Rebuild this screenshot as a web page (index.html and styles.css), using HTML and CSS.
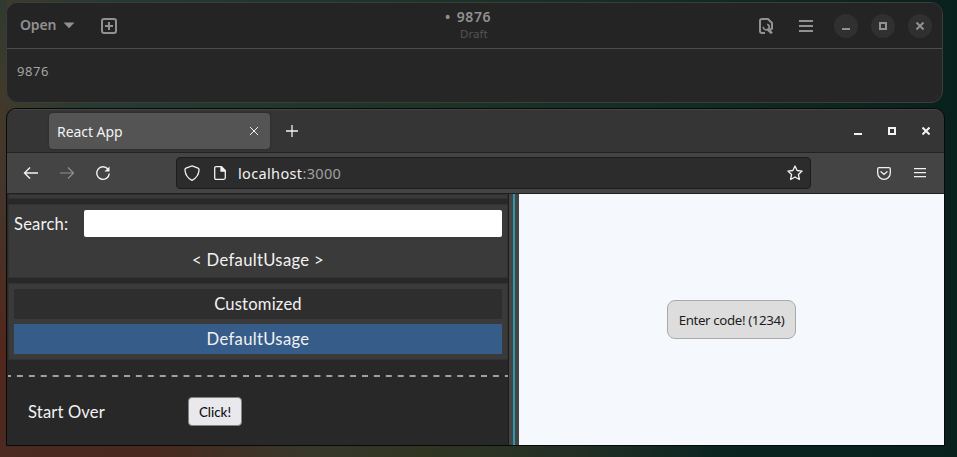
FILE: index.html
```html
<!DOCTYPE html>
<html lang="en">
<head>
<meta charset="utf-8">
<title>Desktop</title>
<link rel="stylesheet" href="styles.css">
</head>
<body>
<section class="editor">
  <header class="editor-bar">
    <div class="editor-left">
      <span class="open">Open</span>
      <svg class="caret" width="12" height="7" viewBox="0 0 12 7"><path d="M0.5 0.5h11L6 6.3z" fill="currentColor"/></svg>
      <svg class="new-tab" width="16" height="16" viewBox="0 0 16 16" fill="none" stroke="currentColor" stroke-width="2"><rect x="1" y="1" width="14" height="14" rx="2"/><path d="M8 4v8M4 8h8"/></svg>
    </div>
    <div class="editor-title"><div class="name"><span>•</span><span>9876</span></div><div class="state">Draft</div></div>
    <div class="editor-right">
      <svg width="16" height="16" viewBox="0 0 16 16" fill="none" stroke="currentColor" stroke-width="2"><path d="M7 15H4Q2 15 2 13V3Q2 1 4 1h6l4 4v6.500"/><path d="M5.300 8.800a2.900 2.900 0 0 0 4 2.800l3.700 3.700M9.200 6.200a2.900 2.900 0 0 1 1.800 3.600l2.500 2.500" stroke-width="1.600"/><path d="M9.500 10.500l4.500 4.800" stroke-width="2.400"/></svg>
      <svg class="menu" width="14" height="14" viewBox="0 0 14 14" fill="none" stroke="currentColor" stroke-width="2"><path d="M0 2h14M0 7h14M0 12h14"/></svg>
      <i class="round"><svg width="8" height="8" viewBox="0 0 8 8"><path d="M0 6h8v2H0z" fill="currentColor"/></svg></i>
      <i class="round"><svg width="8" height="8" viewBox="0 0 8 8" fill="none" stroke="currentColor" stroke-width="2"><path d="M1 1h6v6H1z"/></svg></i>
      <i class="round"><svg width="8" height="8" viewBox="0 0 8 8" fill="none" stroke="currentColor" stroke-width="2"><path d="M.5.5l7 7M7.5.5l-7 7"/></svg></i>
    </div>
  </header>
  <div class="editor-text">9876</div>
</section>

<section class="browser">
  <header class="tabs">
    <div class="tab"><span>React App</span><svg width="10" height="10" viewBox="0 0 10 10" stroke="currentColor" fill="none" stroke-width="1"><path d="M1 1l8 8M9 1l-8 8"/></svg></div>
    <svg class="plus" width="12" height="12" viewBox="0 0 12 12" stroke="currentColor" fill="none" stroke-width="1.3"><path d="M6 0v12M0 6h12"/></svg>
    <div class="controls">
      <svg width="8" height="8" viewBox="0 0 8 8"><path d="M0 6h8v2H0z" fill="currentColor"/></svg>
      <svg width="8" height="8" viewBox="0 0 8 8" fill="none" stroke="currentColor" stroke-width="2"><path d="M1 1h6v6H1z"/></svg>
      <svg width="8" height="8" viewBox="0 0 8 8" fill="none" stroke="currentColor" stroke-width="2"><path d="M.5.5l7 7M7.5.5l-7 7"/></svg>
    </div>
  </header>
  <nav class="toolbar">
    <div class="nav">
      <svg width="16" height="16" viewBox="0 0 16 16" fill="none" stroke="currentColor" stroke-width="1.4"><path d="M15 8H1.5M7 2.5L1.5 8 7 13.5"/></svg>
      <svg class="off" width="16" height="16" viewBox="0 0 16 16" fill="none" stroke="currentColor" stroke-width="1.2"><path d="M1 8h13.5M9 2.5L14.500 8 9 13.500"/></svg>
      <svg width="16" height="16" viewBox="0 0 16 16" fill="none" stroke="currentColor" stroke-width="1.4"><path d="M13 4.200A6.300 6.300 0 1 0 14.300 8.500"/><path d="M14.500 1.500v5H9.500z" fill="currentColor" stroke="none"/></svg>
    </div>
    <div class="address">
      <svg width="16" height="16" viewBox="0 0 16 16" fill="none" stroke="currentColor" stroke-width="1.300"><path d="M8 .9l6 2.300q1.200.5 1 2Q14.500 12 8 15.300 1.500 12 1 5.200.8 3.700 2 3.200z"/></svg>
      <svg class="page" width="12" height="14" viewBox="0 0 12 14" fill="none" stroke="currentColor" stroke-width="1.300"><path d="M2.200.7H7.500L11.300 4.500v7.300q0 1.500-1.500 1.500H2.200Q.7 13.300.7 11.800V2.200Q.7.700 2.200.7z"/><path d="M7 .700v4.300h4.300z" fill="currentColor"/></svg>
      <span class="url">localhost<em>:3000</em></span>
      <svg class="star" width="16" height="16" viewBox="0 0 16 16" fill="none" stroke="currentColor" stroke-width="1.300" stroke-linejoin="round"><path d="M8 1l2.100 4.500 5 .6-3.700 3.400 1 5L8 12l-4.400 2.500 1-5L.9 6.100l5-.6z"/></svg>
    </div>
    <svg class="pocket" width="14" height="13" viewBox="0 0 14 13" fill="none" stroke="currentColor" stroke-width="1.300" stroke-linecap="round"><path d="M2 .7h10q1.300 0 1.300 1.300v4a6.300 6.300 0 0 1-12.600 0V2Q.7.700 2 .7zM4 4.800l3 2.700 3-2.700"/></svg>
    <svg class="burger" width="12" height="10" viewBox="0 0 12 10" fill="none" stroke="currentColor" stroke-width="1.200"><path d="M0 .6h12M0 4.600h12M0 8.600h12"/></svg>
  </nav>
  <main class="content">
    <aside class="side">
      <div class="stub"></div>
      <div class="box search">
        <label class="search-row"><span class="q search-label">Search:</span><input type="text"></label>
        <div class="current"><span class="q crumb">&lt; DefaultUsage &gt;</span></div>
      </div>
      <div class="box list">
        <div class="item"><span class="q custom">Customized</span></div>
        <div class="item selected"><span class="q usage">DefaultUsage</span></div>
      </div>
      <svg class="dashes" width="500" height="2"><path d="M-3 1h504" stroke="#a0a0a0" stroke-width="2" stroke-dasharray="6 5.9"/></svg>
      <div class="action"><span class="q over">Start Over</span><button class="click"><span>Click!</span></button></div>
    </aside>
    <div class="splitter"></div>
    <div class="preview"><button class="code"><span>Enter code! (1234)</span></button></div>
  </main>
</section>
</body>
</html>
```
FILE: styles.css
```css
* { box-sizing: border-box; }
body {
  margin: 0; width: 957px; height: 457px; overflow: hidden;
  padding: 2px 12px 0 6px;
  font-family: "Noto Sans", sans-serif;
  background: linear-gradient(to bottom, #2f3a31 0, #403a2b 20%, #45352a 45%, #52271c 75%, #4b2a21 100%) 0 0 / 7px 100% no-repeat,
    linear-gradient(to right, #403a2b 0, #263a31 10%, #1b3426 45%, #102b23 75%, #09211d 100%) 0 0 / 100% 110px no-repeat,
    linear-gradient(to right, #4b2a21 0, #49291f 16%, #37372a 32%, #303522 45%, #222f25 60%, #0b2420 75%, #09211d 100%);
}
svg { display: block; flex: none; }
.editor {
  width: 937px; height: 101px; border: 1px solid #3c3c3c; border-radius: 12px;
  background: #262626; color: #919191; overflow: hidden;
}
.editor-bar {
  height: 46px; display: grid; grid-template-columns: 1fr auto 1fr; align-items: center;
  background: #242424; border-bottom: 1px solid #4c4c4c;
}
.editor-left, .editor-right { display: flex; align-items: center; }
.editor-left { padding-left: 13px; }
.open { font-size: 14px; font-weight: 600; line-height: 20px; width: 43px; letter-spacing: -.15px; padding-bottom: 1px; }
.new-tab { margin-left: 26px; }
.editor-title { padding-right: 13px; padding-bottom: 2px; }
.name { display: flex; gap: 6px; font-size: 14px; font-weight: 600; line-height: 17px; letter-spacing: .5px; }
.state { font-size: 11.5px; line-height: 17px; color: #545454; padding-left: 15px; }
.editor-right { justify-content: flex-end; padding-right: 10px; }
.menu { margin: 0 21px 0 25px; }
.round { width: 24px; height: 24px; border-radius: 50%; background: #303030; display: grid; place-items: center; margin-left: 13px; }
.menu + .round { margin-left: 0; }
.editor-text { padding: 13px 10px; font-size: 13px; line-height: 18px; color: #a4a4a4; letter-spacing: .55px; }
.browser {
  margin-top: 5px; width: 939px; height: 338px; border: 1px solid #080a0a;
  border-radius: 10px 10px 0 0; overflow: hidden; background: #353535; color: #f2f2f2;
}
.tabs {
  height: 44px; display: flex; align-items: center; border-bottom: 1px solid #222;
  box-shadow: inset 0 1px #454545; padding-left: 42px;
}
.tab {
  width: 221px; height: 36px; border-radius: 4px; background: #545454; display: flex;
  justify-content: space-between; align-items: center; padding: 0 11px 0 8px; font-size: 14px;
  box-shadow: 0 0 2px #242424;
}
.tab span { letter-spacing: -.05px; padding-top: 1px; }
.plus { margin-left: 16px; }
.controls { margin-left: auto; display: flex; gap: 26px; padding-right: 14px; }
.toolbar { height: 41px; display: flex; align-items: center; background: #444; border-bottom: 1px solid #202020; padding-left: 16px; }
.nav { display: flex; gap: 20px; width: 153px; }
.off { color: #909090; }
.address {
  width: 635px; height: 32px; border: 1px solid #1c1c1c; border-radius: 4px; background: #2c2c2c;
  display: flex; align-items: center; padding: 0 7px;
}
.page { margin-left: 14px; }
.url { margin-left: 12px; font-size: 14.5px; line-height: 20px; letter-spacing: .35px; padding-bottom: 1px; }
.url em { font-style: normal; color: #a0a0a0; }
.star { margin-left: auto; }
.pocket { margin-left: 66px; }
.burger { margin-left: 23px; }
.content { height: 251px; display: flex; }
.side { width: 502px; background: #282828; border-right: 1px solid #1c1c1c; padding-left: 1px; }
.stub { height: 5px; background: #3a3a3a; border: 1px solid #303030; margin-bottom: 5px; }
.box { background: #3a3a3a; border: 1px solid #323232; padding: 5px; }
.search { height: 74px; margin-bottom: 5px; }
.search-row { display: flex; height: 27px; align-items: center; }
.q { font-family: Lato, sans-serif; font-size: 16.6px; line-height: 22px; color: #f2f2f2; white-space: nowrap; }
.search-label { width: 70px; letter-spacing: .2px; }
.search-row input { flex: 1; min-width: 0; height: 27px; border: 0; border-radius: 2px; background: #fff; padding: 0 6px; }
.current { text-align: center; padding-top: 12px; }
.crumb, .usage { letter-spacing: .35px; }
.custom { letter-spacing: .2px; }
.list { height: 77px; display: flex; flex-direction: column; gap: 5px; }
.item { height: 30px; background: #2e2e2e; display: grid; place-items: center; }
.selected { background: #365d8a; }
.dashes { margin-top: 15px; }
.action { display: flex; align-items: center; padding: 20px 20px 0; }
.over { width: 160px; letter-spacing: .15px; }
.click {
  width: 54px; height: 29px; border: 1px solid #828282; border-radius: 4px; background: #e9e9ed;
  color: #111; font: 500 13.3px Lato, sans-serif; padding: 0; text-align: center; white-space: nowrap;
}
.splitter { width: 10px; background: linear-gradient(to right, #444 4px, #2a9aad 4px 6px, #444 6px); }
.preview { flex: 1; background: #f5f9fd; display: flex; justify-content: center; align-items: center; }
.code {
  width: 129px; height: 39px; border: 1px solid #aaa; border-radius: 8px; background: #ddd;
  color: #1c1c1c; font: 13.3px "Noto Sans", sans-serif; letter-spacing: -.37px; padding: 0; white-space: nowrap;
}
```
